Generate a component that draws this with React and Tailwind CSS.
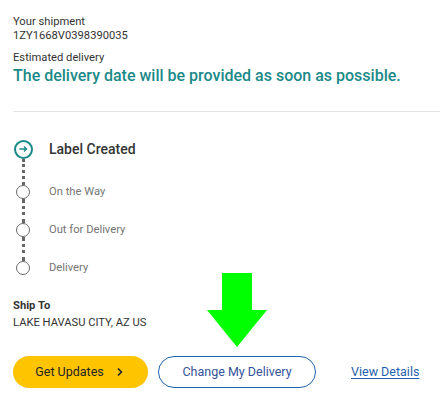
import { ChevronRight } from "lucide-react";

const steps = ["On the Way", "Out for Delivery", "Delivery"];

const Dots = ({ className }) => (
  <div className={`mx-auto w-0 border-l-[3px] border-dotted border-[#666] ${className}`} />
);

export default function App() {
  return (
    <div className="relative h-[405px] w-[440px] overflow-hidden bg-white font-['Roboto',sans-serif] text-[#333]">
      <div className="pl-[13px] pt-[15px]">
        <p className="text-[11.2px] leading-[14px]">Your shipment</p>
        <p className="text-[11.2px] leading-[14px]">1ZY1668V0398390035</p>
        <p className="mt-[8px] text-[11.2px] leading-[14px]">Estimated delivery</p>
        <h1 className="text-[16px] font-medium leading-[21px] text-[#1a8a88]">
          The delivery date will be provided as soon as possible.
        </h1>
        <div className="mt-[25px] h-px bg-[#e3e3e3]" />

        <div className="mt-[27px]">
          <div className="flex h-[20px] items-center">
            <div className="flex w-[20px] justify-center">
              <div className="flex h-[19px] w-[19px] items-center justify-center rounded-full border-[2.5px] border-[#1a8a88]">
                <svg width="9" height="8" viewBox="0 0 9 8" fill="none" stroke="#1a8a88" strokeWidth="1.4">
                  <path d="M0.5 4h7M5 1.5l2.5 2.5L5 6.5" />
                </svg>
              </div>
            </div>
            <span className="ml-[16px] text-[14px] font-medium text-[#333]">Label Created</span>
          </div>
          {steps.map((label, i) => (
            <div key={label}>
              <div className="w-[20px]">
                <Dots className={i === 0 ? "h-[26px]" : "h-[24px]"} />
              </div>
              <div className="flex h-[14px] items-center">
                <div className="flex w-[20px] justify-center">
                  <div className="h-[14px] w-[14px] rounded-full border-[1.5px] border-[#6b6b6b]" />
                </div>
                <span className="ml-[16px] text-[11.2px] text-[#757575]">{label}</span>
              </div>
            </div>
          ))}
        </div>

        <p className="mt-[24px] text-[11.2px] font-bold leading-[14px]">Ship To</p>
        <p className="mt-[3px] text-[11.2px] leading-[14px]">LAKE HAVASU CITY, AZ US</p>

        <div className="mt-[26px] flex items-center">
          <button className="flex h-[32px] w-[135px] items-center justify-center gap-[10px] rounded-full bg-[#ffc400] text-[12.5px] text-[#222]">
            Get Updates
            <ChevronRight size={12} strokeWidth={3.5} />
          </button>
          <button className="ml-[10px] h-[32px] w-[158px] rounded-full border-[1.5px] border-[#1f62b0] text-[12.5px] text-[#34539a]">
            Change My Delivery
          </button>
          <a className="ml-[35px] text-[12.5px] text-[#1f5fad] underline underline-offset-2">View Details</a>
        </div>
      </div>

      <svg className="absolute left-[207px] top-[273px]" width="61" height="75" viewBox="0 0 61 75">
        <polygon points="15,0 45,0 45,37 60,37 30,74 0,37 15,37" fill="#00ff00" />
      </svg>
    </div>
  );
}
